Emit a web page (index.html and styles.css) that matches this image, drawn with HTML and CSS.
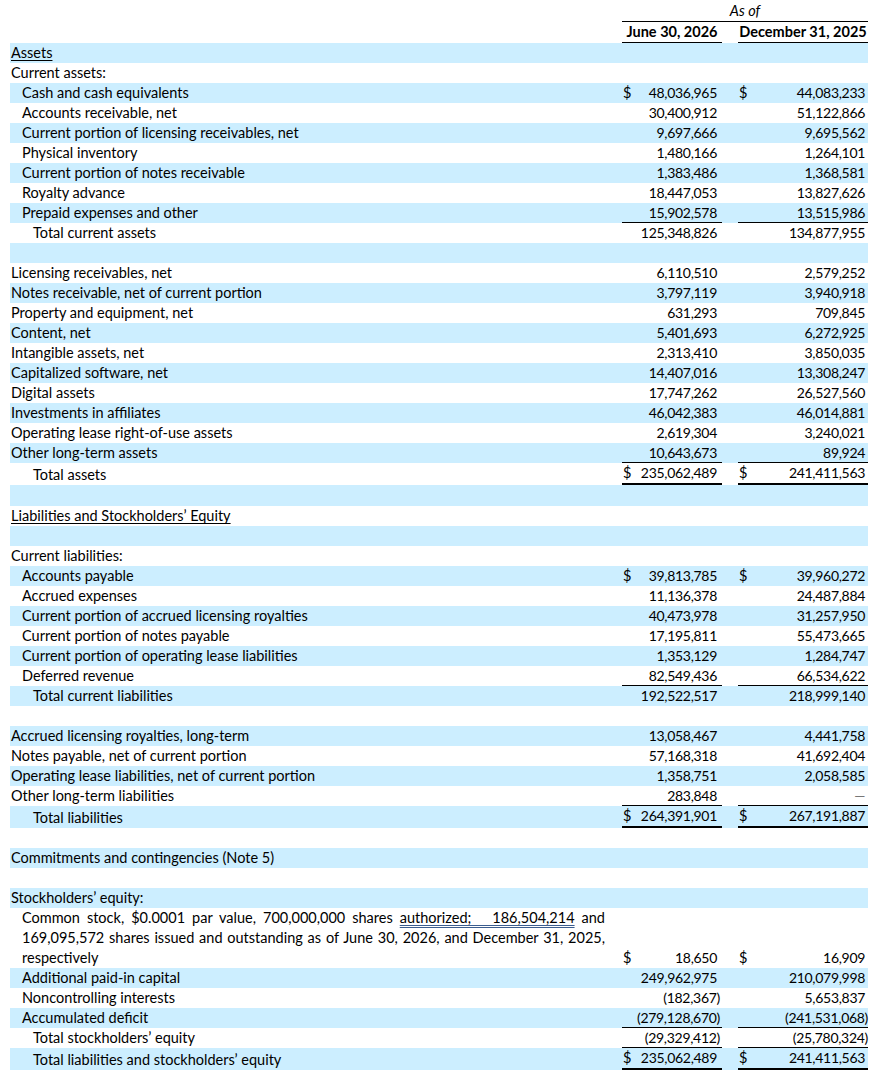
FILE: index.html
```html
<!DOCTYPE html>
<html lang="en">
<head>
<meta charset="utf-8">
<title>Condensed Consolidated Balance Sheets</title>
<link rel="stylesheet" href="styles.css">
</head>
<body>
<table class="bs">
  <colgroup>
    <col class="c-label">
    <col class="c-cur">
    <col class="c-num1">
    <col class="c-gap">
    <col class="c-cur">
    <col class="c-num2">
  </colgroup>
  <thead>
    <tr class="h1">
      <th></th>
      <th colspan="5" class="asof">As of</th>
    </tr>
    <tr class="h2">
      <th></th>
      <th colspan="2" class="date">June 30, 2026</th>
      <th></th>
      <th colspan="2" class="date">December 31, 2025</th>
    </tr>
  </thead>
  <tbody>
    <tr><td class="lbl"><span class="uline">Assets</span></td><td></td><td></td><td></td><td></td><td></td></tr>
    <tr><td class="lbl">Current assets:</td><td></td><td></td><td></td><td></td><td></td></tr>
    <tr><td class="lbl i1">Cash and cash equivalents</td><td class="cur">$</td><td class="num n1">48,036,965</td><td></td><td class="cur">$</td><td class="num n2">44,083,233</td></tr>
    <tr><td class="lbl i1">Accounts receivable, net</td><td></td><td class="num n1">30,400,912</td><td></td><td></td><td class="num n2">51,122,866</td></tr>
    <tr><td class="lbl i1">Current portion of licensing receivables, net</td><td></td><td class="num n1">9,697,666</td><td></td><td></td><td class="num n2">9,695,562</td></tr>
    <tr><td class="lbl i1">Physical inventory</td><td></td><td class="num n1">1,480,166</td><td></td><td></td><td class="num n2">1,264,101</td></tr>
    <tr><td class="lbl i1">Current portion of notes receivable</td><td></td><td class="num n1">1,383,486</td><td></td><td></td><td class="num n2">1,368,581</td></tr>
    <tr><td class="lbl i1">Royalty advance</td><td></td><td class="num n1">18,447,053</td><td></td><td></td><td class="num n2">13,827,626</td></tr>
    <tr><td class="lbl i1">Prepaid expenses and other</td><td class="b1"></td><td class="num n1 b1">15,902,578</td><td></td><td class="b1"></td><td class="num n2 b1">13,515,986</td></tr>
    <tr><td class="lbl i2">Total current assets</td><td></td><td class="num n1">125,348,826</td><td></td><td></td><td class="num n2">134,877,955</td></tr>
    <tr><td class="lbl"></td><td></td><td></td><td></td><td></td><td></td></tr>
    <tr><td class="lbl">Licensing receivables, net</td><td></td><td class="num n1">6,110,510</td><td></td><td></td><td class="num n2">2,579,252</td></tr>
    <tr><td class="lbl">Notes receivable, net of current portion</td><td></td><td class="num n1">3,797,119</td><td></td><td></td><td class="num n2">3,940,918</td></tr>
    <tr><td class="lbl">Property and equipment, net</td><td></td><td class="num n1">631,293</td><td></td><td></td><td class="num n2">709,845</td></tr>
    <tr><td class="lbl">Content, net</td><td></td><td class="num n1">5,401,693</td><td></td><td></td><td class="num n2">6,272,925</td></tr>
    <tr><td class="lbl">Intangible assets, net</td><td></td><td class="num n1">2,313,410</td><td></td><td></td><td class="num n2">3,850,035</td></tr>
    <tr><td class="lbl">Capitalized software, net</td><td></td><td class="num n1">14,407,016</td><td></td><td></td><td class="num n2">13,308,247</td></tr>
    <tr><td class="lbl">Digital assets</td><td></td><td class="num n1">17,747,262</td><td></td><td></td><td class="num n2">26,527,560</td></tr>
    <tr><td class="lbl">Investments in affiliates</td><td></td><td class="num n1">46,042,383</td><td></td><td></td><td class="num n2">46,014,881</td></tr>
    <tr><td class="lbl">Operating lease right-of-use assets</td><td></td><td class="num n1">2,619,304</td><td></td><td></td><td class="num n2">3,240,021</td></tr>
    <tr><td class="lbl">Other long-term assets</td><td class="b1"></td><td class="num n1 b1">10,643,673</td><td></td><td class="b1"></td><td class="num n2 b1">89,924</td></tr>
    <tr><td class="lbl i2">Total assets</td><td class="cur b2">$</td><td class="num n1 b2">235,062,489</td><td></td><td class="cur b2">$</td><td class="num n2 b2">241,411,563</td></tr>
    <tr class="r21"><td class="lbl"></td><td></td><td></td><td></td><td></td><td></td></tr>
    <tr><td class="lbl"><span class="uline">Liabilities and Stockholders’ Equity</span></td><td></td><td></td><td></td><td></td><td></td></tr>
    <tr><td class="lbl"></td><td></td><td></td><td></td><td></td><td></td></tr>
    <tr><td class="lbl">Current liabilities:</td><td></td><td></td><td></td><td></td><td></td></tr>
    <tr><td class="lbl i1">Accounts payable</td><td class="cur">$</td><td class="num n1">39,813,785</td><td></td><td class="cur">$</td><td class="num n2">39,960,272</td></tr>
    <tr><td class="lbl i1">Accrued expenses</td><td></td><td class="num n1">11,136,378</td><td></td><td></td><td class="num n2">24,487,884</td></tr>
    <tr><td class="lbl i1">Current portion of accrued licensing royalties</td><td></td><td class="num n1">40,473,978</td><td></td><td></td><td class="num n2">31,257,950</td></tr>
    <tr><td class="lbl i1">Current portion of notes payable</td><td></td><td class="num n1">17,195,811</td><td></td><td></td><td class="num n2">55,473,665</td></tr>
    <tr><td class="lbl i1">Current portion of operating lease liabilities</td><td></td><td class="num n1">1,353,129</td><td></td><td></td><td class="num n2">1,284,747</td></tr>
    <tr><td class="lbl i1">Deferred revenue</td><td class="b1"></td><td class="num n1 b1">82,549,436</td><td></td><td class="b1"></td><td class="num n2 b1">66,534,622</td></tr>
    <tr><td class="lbl i2">Total current liabilities</td><td></td><td class="num n1">192,522,517</td><td></td><td></td><td class="num n2">218,999,140</td></tr>
    <tr><td class="lbl"></td><td></td><td></td><td></td><td></td><td></td></tr>
    <tr><td class="lbl">Accrued licensing royalties, long-term</td><td></td><td class="num n1">13,058,467</td><td></td><td></td><td class="num n2">4,441,758</td></tr>
    <tr><td class="lbl">Notes payable, net of current portion</td><td></td><td class="num n1">57,168,318</td><td></td><td></td><td class="num n2">41,692,404</td></tr>
    <tr><td class="lbl">Operating lease liabilities, net of current portion</td><td></td><td class="num n1">1,358,751</td><td></td><td></td><td class="num n2">2,058,585</td></tr>
    <tr><td class="lbl">Other long-term liabilities</td><td class="b1"></td><td class="num n1 b1">283,848</td><td></td><td class="b1"></td><td class="num n2 b1"><span class="dash">—</span></td></tr>
    <tr><td class="lbl i2">Total liabilities</td><td class="cur b2">$</td><td class="num n1 b2">264,391,901</td><td></td><td class="cur b2">$</td><td class="num n2 b2">267,191,887</td></tr>
    <tr><td class="lbl"></td><td></td><td></td><td></td><td></td><td></td></tr>
    <tr><td class="lbl">Commitments and contingencies (Note 5)</td><td></td><td></td><td></td><td></td><td></td></tr>
    <tr><td class="lbl"></td><td></td><td></td><td></td><td></td><td></td></tr>
    <tr><td class="lbl">Stockholders’ equity:</td><td></td><td></td><td></td><td></td><td></td></tr>
    <tr><td class="lbl i1 para">Common stock, $0.0001 par value, 700,000,000 shares <span class="link">authorized;&nbsp;&nbsp; 186,504,214</span> and 169,095,572 shares issued and outstanding as of June 30, 2026, and December 31, 2025, respectively</td><td class="cur">$</td><td class="num n1">18,650</td><td></td><td class="cur">$</td><td class="num n2">16,909</td></tr>
    <tr><td class="lbl i1">Additional paid-in capital</td><td></td><td class="num n1">249,962,975</td><td></td><td></td><td class="num n2">210,079,998</td></tr>
    <tr><td class="lbl i1">Noncontrolling interests</td><td></td><td class="num n1">(182,367<span class="paren">)</span></td><td></td><td></td><td class="num n2">5,653,837</td></tr>
    <tr><td class="lbl i1">Accumulated deficit</td><td class="b1"></td><td class="num n1 b1">(279,128,670<span class="paren">)</span></td><td></td><td class="b1"></td><td class="num n2 b1">(241,531,068<span class="paren">)</span></td></tr>
    <tr><td class="lbl i2">Total stockholders’ equity</td><td class="b1"></td><td class="num n1 b1">(29,329,412<span class="paren">)</span></td><td></td><td class="b1"></td><td class="num n2 b1">(25,780,324<span class="paren">)</span></td></tr>
    <tr><td class="lbl i2">Total liabilities and stockholders’ equity</td><td class="cur b2">$</td><td class="num n1 b2">235,062,489</td><td></td><td class="cur b2">$</td><td class="num n2 b2">241,411,563</td></tr>
  </tbody>
</table>
</body>
</html>
```

FILE: styles.css
```css
html, body {
  margin: 0;
  padding: 0;
  background: #ffffff;
}

body {
  padding: 0 10px;
  font-family: "Lato", "Liberation Sans", sans-serif;
  font-size: 14.5px;
  color: #000000;
}

.bs {
  width: 858px;
  border-collapse: separate;
  border-spacing: 0;
  table-layout: fixed;
}

.c-label { width: 612px; }
.c-cur { width: 14px; }
.c-num1 { width: 86px; }
.c-gap { width: 16px; }
.c-num2 { width: 116px; }

.bs tr {
  height: 20px;
}

.bs tr.h1 {
  height: 22px;
}

.bs tr.r21 {
  height: 21px;
}

.bs th,
.bs td {
  padding: 0;
  line-height: 20px;
  vertical-align: bottom;
  white-space: nowrap;
  font-weight: normal;
}

.bs th.asof {
  font-style: italic;
  text-align: center;
  border-bottom: 1px solid #000;
}

.bs th.date {
  font-weight: bold;
  text-align: center;
  border-bottom: 1px solid #000;
}

.bs tbody tr:nth-child(odd) td {
  background: #cceeff;
}

.bs td.lbl {
  padding-left: 1px;
  text-align: left;
}

.bs td.i1 { padding-left: 12px; }
.bs td.i2 { padding-left: 23px; }

.uline {
  text-decoration: underline;
  text-underline-offset: 2px;
}

.bs td.para {
  white-space: normal;
  text-align: justify;
  padding-right: 17px;
}

.link {
  text-decoration: underline double #3b5d8f;
  text-underline-offset: 2px;
}

.bs td.cur {
  text-align: left;
  padding-left: 1px;
}

.bs td.num {
  text-align: right;
  font-size: 14px;
  letter-spacing: -0.3px;
}

.bs td.n1 { padding-right: 5px; }
.bs td.n2 { padding-right: 3px; }

.paren {
  margin-right: -3px;
}

.dash {
  color: #777777;
}

.bs td.b1 { box-shadow: inset 0 -1px 0 #000; }
.bs td.b2 { border-bottom: 2px solid #000; }
```
